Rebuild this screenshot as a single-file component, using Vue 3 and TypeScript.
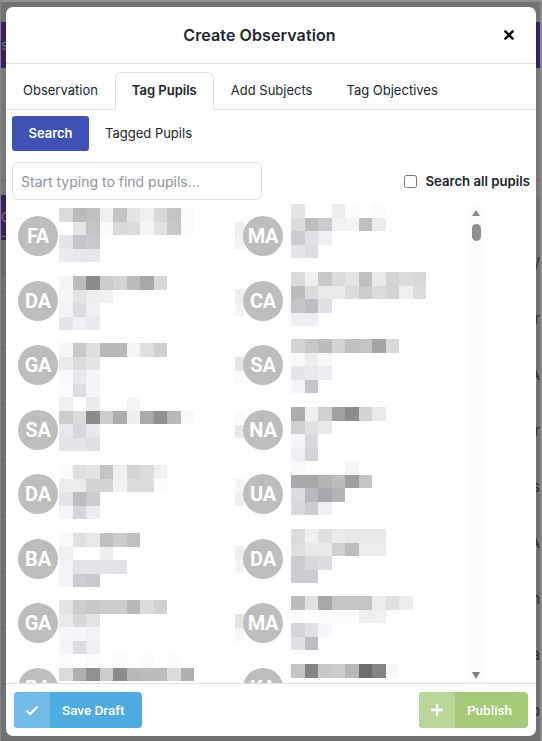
<script setup lang="ts">
type Pupil = {
  initials: string;
  offset: number;
  ghostTop?: number;
  ghost?: number[];
  rows: number[][];
};

const left: Pupil[] = [
  { initials: "FA", offset: 4, rows: [[0xdc, 0xba, 0xc0, 0xf0, 0xc4, 0xe4, 0xf0, 0xd8, 0xc4, 0xfb], [0xff, 0xe6, 0xc4, 0xfa, 0xda, 0xdc, 0xf4, 0xe2, 0xc8, 0xfb], [0xe4, 0xc4, 0xc8], [0xea, 0xe8, 0xe6]] },
  { initials: "DA", offset: 7.5, rows: [[0xf4, 0xbc, 0x8c, 0xcc, 0xd4, 0xbc, 0xa8, 0xd8], [0xf6, 0xe4, 0xee, 0xf0], [0xf2, 0xdc, 0xee], [0xe4, 0xf0, 0xe8]] },
  { initials: "GA", offset: 10, rows: [[0xf6, 0xc8, 0xde, 0xb8, 0xb8, 0xf4, 0xe0, 0xd0], [0xea, 0xdc, 0xe6], [0xf8, 0xe8, 0xf4], [0xfa, 0xdc, 0xf4]] },
  { initials: "SA", offset: -0.5, rows: [[0xf0, 0xff, 0xea, 0xff, 0xff, 0xf4], [0xcc, 0xdc, 0x8c, 0xcc, 0xac, 0xee, 0xaa, 0x90, 0xb8, 0xf8], [0xe8, 0xd8, 0xe8], [0xe4, 0xe4, 0xe0]] },
  { initials: "DA", offset: 3, rows: [[0xfb, 0xe0, 0xe4, 0xc4, 0xf0, 0xd4, 0xdc, 0xf0], [0xec, 0xec, 0xd4, 0xd4, 0xf2, 0xdc, 0xdc, 0xfb], [0xe4, 0xbc, 0xcc], [0xf4, 0xd4, 0xec]] },
  { initials: "BA", offset: 6.5, rows: [[0xf8, 0xe0, 0xe8, 0xc0, 0xcc, 0xc0], [0xf0, 0xff, 0xff, 0xee], [0xf2, 0xe4, 0xe4, 0xe4, 0xe2], [0xf2, 0xcc, 0xc8]] },
  { initials: "GA", offset: 9, rows: [[0xe4, 0xcc, 0xc8, 0xcc, 0xcc, 0xb8, 0xdc, 0xd0], [0xea, 0xd8, 0xe4], [0xf6, 0xf4, 0xf0], [0xf4, 0xdc, 0xee]] },
  { initials: "BA", offset: -1.5, rows: [[0xfb, 0xff, 0xfb, 0xff, 0xfb, 0xff, 0xfb, 0xff, 0xfb], [0xdc, 0xb0, 0x90, 0xcc, 0x8c, 0xb8, 0xbc, 0xbc, 0xdc, 0xb0]] },
];

const right: Pupil[] = [
  { initials: "MA", offset: 0, ghostTop: 18, ghost: [0xee, 0xf2], rows: [[0xe4, 0xff, 0xff, 0xec, 0xfc, 0xff, 0xfb], [0xdc, 0xbc, 0xcc, 0xf2, 0xf4, 0xc0, 0xec], [0xcc, 0xe0, 0xee], [0xe4, 0xdc]] },
  { initials: "CA", offset: 3.5, ghostTop: 20.5, ghost: [0xee, 0xf4], rows: [[0xdc, 0xf0, 0xc8, 0xdc, 0xe4, 0xc0, 0xea, 0xd4, 0xdc, 0xd8], [0xbc, 0xdc, 0xea, 0xea, 0xdc, 0xcc, 0xdc, 0xd4, 0xf0, 0xdc], [0xc4, 0xbc, 0xe0], [0xee, 0xee]] },
  { initials: "SA", offset: 6, ghostTop: 24, ghost: [0xe4, 0xfa], rows: [[0xd4, 0xc8, 0xbc, 0xd4, 0xc0, 0xc4, 0xa4, 0xd8], [0xf8, 0xec, 0xf8], [0xe4, 0xe8, 0xec], [0xf4, 0xc4]] },
  { initials: "NA", offset: 9.5, ghostTop: 13.5, ghost: [0xfa, 0xe8], rows: [[0xac, 0xf0, 0xd0, 0xa0, 0x8c, 0xd4, 0xea], [0xd0, 0xe2, 0xe8], [0xf4, 0xd8], [0xee, 0xd4]] },
  { initials: "UA", offset: -1, ghostTop: 17, ghost: [0xf4, 0xee], rows: [[0xf8, 0xff, 0xff, 0xff, 0xf6], [0xa8, 0xa8, 0xb4, 0xbc, 0xa0, 0xc4], [0xdc, 0xb8, 0xa8, 0xb4], [0xd8, 0xcc, 0xee]] },
  { initials: "DA", offset: 2.5, ghostTop: 19.5, ghost: [0xee, 0xf4], rows: [[0xdc, 0xf0, 0xe0, 0xec, 0xe8, 0xe8, 0xe8], [0xe0, 0xe8, 0xe8, 0xd0, 0xbc, 0xec, 0xec], [0xcc, 0xd8, 0xdc], [0xcc, 0xcc]] },
  { initials: "MA", offset: 5, ghostTop: 23, ghost: [0xe4, 0xf6], rows: [[0xbc, 0xe0, 0xa8, 0xc4, 0xc4, 0xc4, 0xec, 0xe0, 0xec], [0xfc, 0xff, 0xfc, 0xfc, 0xfc, 0xee, 0xf0], [0xd4, 0xe0, 0xf6], [0xe0, 0xbc]] },
  { initials: "KA", offset: 8.5, rows: [[0xc4, 0x84, 0xc8, 0xcc, 0xb8, 0x6c, 0x84, 0xf8]] },
];

// names get a neutral grey, the lines under them are a touch bluer
function cellColor(v: number, rowIndex: number, total: number): string {
  const tinted = total > 2 && rowIndex >= total - 2;
  return tinted ? `rgb(${v - 1},${v + 1},${Math.min(v + 5, 255)})` : `rgb(${v},${v},${v})`;
}

const pupils = left.flatMap((p, i) => [
  { ...p, col: "col-left", key: `l${i}` },
  { ...right[i], col: "col-right", key: `r${i}` },
]);

const tabs = ["Observation", "Tag Pupils", "Add Subjects", "Tag Objectives"];

// what shows of the page behind the dialog, down the right hand edge
const behindRows = ["", "", "/", "r", "A", "r", "s", "A", "in", "a", "p"];
</script>

<template>
  <div class="page">
    <div class="backdrop">
      <div class="band band-top"><span>s</span></div>
      <div class="behind-a"></div>
      <div class="band band-mid"><span>C</span></div>
      <div class="behind-b"></div>
      <div class="behind-rows">
        <div v-for="(t, i) in behindRows" :key="i" class="behind-row">{{ t }}</div>
      </div>
    </div>

    <div class="modal">
      <header class="modal-head">
        <h1>Create Observation</h1>
        <svg class="close" viewBox="0 0 12 12" width="12" height="12" aria-label="Close">
          <path d="M1.6 1.6 10.4 10.4M10.4 1.6 1.6 10.4" stroke="#111" stroke-width="2.6" fill="none" />
        </svg>
      </header>

      <nav class="tabs">
        <a v-for="t in tabs" :key="t" class="tab" :class="{ active: t === 'Tag Pupils' }">{{ t }}</a>
      </nav>

      <div class="sub-tabs">
        <a class="pill active">Search</a>
        <a class="pill">Tagged Pupils</a>
      </div>

      <div class="search-row">
        <input class="search" type="text" placeholder="Start typing to find pupils..." />
        <label class="all">
          <input type="checkbox" />
          <span>Search all pupils</span>
        </label>
      </div>

      <div class="list-wrap">
        <div class="list">
          <div v-for="p in pupils" :key="p.key" class="pupil" :class="p.col">
            <div class="ghost" :style="{ marginTop: (p.ghostTop ?? 0) + 'px' }">
              <i v-for="(g, i) in p.ghost ?? []" :key="i" :style="{ background: cellColor(g, 0, 1) }"></i>
            </div>
            <div class="avatar">{{ p.initials }}</div>
            <div class="blur" :style="{ marginTop: p.offset + 'px' }">
              <div v-for="(row, r) in p.rows" :key="r" class="blur-row">
                <i
                  v-for="(v, c) in row"
                  :key="c"
                  :style="{ background: cellColor(v, r, p.rows.length) }"
                ></i>
              </div>
            </div>
          </div>
        </div>
        <div class="scrollbar">
          <span class="arrow up"></span>
          <span class="thumb"></span>
          <span class="arrow down"></span>
        </div>
      </div>

      <footer class="modal-foot">
        <button class="action draft" type="button">
          <span class="icon">
            <svg viewBox="0 0 14 14" width="14" height="14">
              <path d="M1.5 7.5 5.2 11 12.5 3.5" stroke="#fff" stroke-width="2.2" fill="none" />
            </svg>
          </span>
          <span class="label">Save Draft</span>
        </button>
        <button class="action publish" type="button">
          <span class="icon">
            <svg viewBox="0 0 14 14" width="14" height="14">
              <path d="M7 1.2v11.6M1.2 7h11.6" stroke="#fff" stroke-width="2.4" fill="none" />
            </svg>
          </span>
          <span class="label">Publish</span>
        </button>
      </footer>
    </div>
  </div>
</template>

<style>
html,
body {
  margin: 0;
  overflow: hidden;
}
</style>

<style scoped>
.page {
  position: relative;
  width: 542px;
  height: 741px;
  overflow: hidden;
  font-family: Inter, "Liberation Sans", sans-serif;
  color: #212529;
}

.backdrop {
  width: 542px;
  height: 741px;
  padding-top: 20px;
  box-sizing: border-box;
  background: #727272;
  border-top: 2px solid #8f8f8f;
  border-left: 1px solid #858585;
  border-right: 2px solid #8a8a8a;
  overflow: hidden;
}

.band {
  background: #37205f;
  color: #77708a;
  font-size: 13px;
}

.band span {
  display: block;
}

.band-top {
  height: 46px;
  line-height: 46px;
}

.behind-a {
  height: 127px;
  background: #787878;
}

.band-mid {
  width: 5px;
  height: 45px;
  line-height: 45px;
  overflow: hidden;
}

.behind-b {
  width: 5px;
  height: 37px;
  background: #696969;
}

.behind-rows {
  margin-top: -152px;
  display: flex;
  flex-direction: column;
  align-items: stretch;
  position: relative;
  z-index: 0;
}

.behind-row {
  height: 56px;
  box-sizing: border-box;
  border-bottom: 1px solid #676767;
  text-align: right;
  font-size: 15px;
  line-height: 52px;
  color: #1d2a3a;
  white-space: nowrap;
}

.modal {
  position: absolute;
  left: 6px;
  top: 7px;
  z-index: 1;
  width: 530px;
  height: 729px;
  background: #fff;
  border-radius: 7px;
  display: flex;
  flex-direction: column;
  overflow: hidden;
}

.modal-head {
  flex: none;
  height: 57px;
  box-sizing: border-box;
  padding-right: 23px;
  border-bottom: 1px solid #dee2e6;
  display: flex;
  align-items: center;
  justify-content: center;
  position: relative;
}

.modal-head h1 {
  margin: 0;
  font-size: 16px;
  font-weight: 600;
  letter-spacing: 0.1px;
  color: #212529;
}

.close {
  position: absolute;
  right: 21px;
  top: 22px;
}

.tabs {
  flex: none;
  height: 46px;
  box-sizing: border-box;
  padding-top: 8px;
  border-bottom: 1px solid #dee2e6;
  display: flex;
  font-size: 13px;
}

.tab {
  box-sizing: border-box;
  height: 38px;
  padding: 0 16px;
  line-height: 35px;
  border: 1px solid transparent;
  border-radius: 6px 6px 0 0;
  white-space: nowrap;
}

.tab.active {
  font-weight: 600;
  background: #fff;
  border-color: #dee2e6 #dee2e6 #fff;
}

.sub-tabs {
  flex: none;
  display: flex;
  padding: 6px 6px 0;
  font-size: 13px;
}

.pill {
  height: 35px;
  line-height: 35px;
  padding: 0 16px;
  border-radius: 3px;
  white-space: nowrap;
}

.pill.active {
  width: 77px;
  box-sizing: border-box;
  text-align: center;
  padding: 0;
  background: #3f51b5;
  color: #fff;
  font-weight: 600;
}

.search-row {
  flex: none;
  display: flex;
  align-items: center;
  justify-content: space-between;
  padding: 11px 6px 0;
}

.search {
  box-sizing: border-box;
  width: 250px;
  height: 38px;
  padding: 0 8px;
  border: 1px solid #dee2e6;
  border-radius: 6px;
  font: 14px Inter, sans-serif;
  outline: none;
}

.search::placeholder {
  color: #8e959c;
}

.all {
  display: flex;
  align-items: center;
  gap: 8px;
  font-size: 13.2px;
  font-weight: 600;
}

.all input {
  width: 13px;
  height: 13px;
  margin: 0;
}

.list-wrap {
  flex: 1;
  min-height: 0;
  display: flex;
  overflow: hidden;
  margin-top: 4px;
}

.list {
  flex: none;
  width: 457px;
  padding-left: 6px;
  display: grid;
  grid-template-columns: 223px 223px;
  grid-auto-rows: 64.5px;
  align-content: start;
}

.pupil {
  display: flex;
  align-items: flex-start;
  min-width: 0;
}

.ghost {
  flex: none;
  width: 9px;
  margin-right: -1px;
  display: flex;
  flex-direction: column;
}

.ghost i {
  display: block;
  height: 13.5px;
}

.col-left .ghost {
  width: 6px;
  margin-right: 0;
}

.col-left .ghost i {
  display: none;
}

.avatar {
  flex: none;
  position: relative;
  width: 40px;
  height: 40px;
  margin-top: 12px;
  border-radius: 50%;
  background: #bdbdbd;
  color: #fff;
  font: 700 20px/40px Roboto, sans-serif;
  text-align: center;
  letter-spacing: -0.2px;
}

.blur {
  flex: none;
  margin-left: 1px;
}

.col-right .blur {
  margin-left: 8px;
}

.blur-row {
  display: flex;
  height: 13.5px;
}

.blur-row i {
  display: block;
  width: 13.5px;
  height: 100%;
}

.scrollbar {
  flex: none;
  width: 14px;
  background: #fcfcfc;
  position: relative;
  display: flex;
  flex-direction: column;
  align-items: center;
}

.arrow {
  width: 0;
  height: 0;
  border-left: 4.5px solid transparent;
  border-right: 4.5px solid transparent;
}

.arrow.up {
  margin-top: 6px;
  border-bottom: 6px solid #8a8a8a;
}

.thumb {
  width: 9px;
  height: 17px;
  margin-top: 8px;
  border-radius: 5px;
  background: #8f8f8f;
}

.arrow.down {
  margin-top: auto;
  margin-bottom: 4px;
  border-top: 7px solid #7f7f7f;
}

.modal-foot {
  flex: none;
  height: 53px;
  box-sizing: border-box;
  border-top: 1px solid #dee2e6;
  padding: 8px 8px 0;
  display: flex;
  justify-content: space-between;
}

.action {
  height: 36px;
  padding: 0;
  border: 0;
  border-radius: 4px;
  display: flex;
  align-items: stretch;
  overflow: hidden;
  color: #fff;
  font-family: Roboto, sans-serif;
  font-size: 13.5px;
  font-weight: 500;
}

.action .icon {
  width: 36px;
  display: flex;
  align-items: center;
  justify-content: center;
}

.action .label {
  display: flex;
  align-items: center;
}

.draft {
  width: 128px;
  background: #4eabe0;
}

.draft .icon {
  background: #72bbe6;
}

.draft .label {
  padding-left: 12px;
}

.publish {
  width: 109px;
  background: #a6cb7a;
}

.publish .icon {
  background: #b8d697;
}

.publish .label {
  padding-left: 12px;
}
</style>
